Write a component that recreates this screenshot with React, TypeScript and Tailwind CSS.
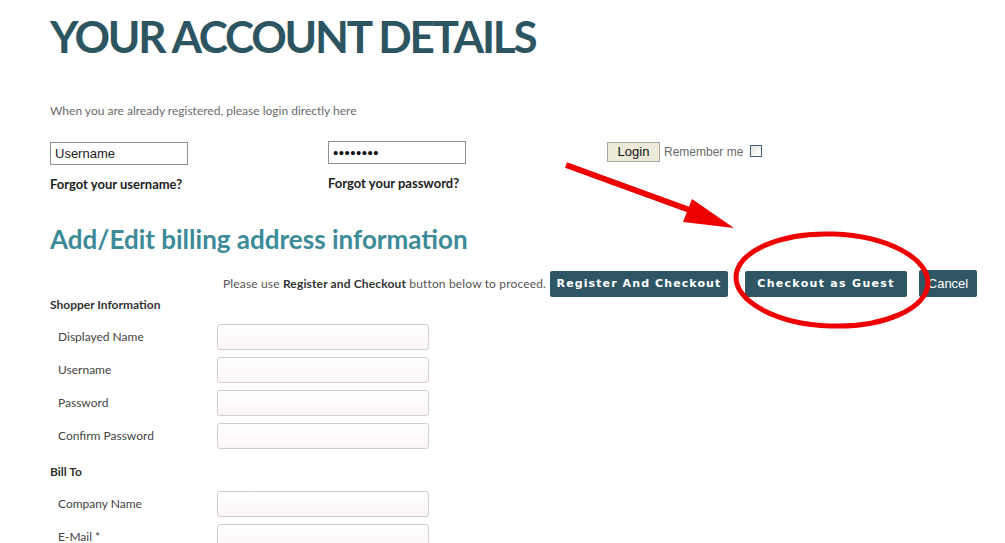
import React from "react";

const labelRows = ["Displayed Name", "Username", "Password", "Confirm Password"];

function FieldRow({ label }: { label: string }) {
  return (
    <div className="flex items-center h-[26px]">
      <label className="w-[167px] pl-[8px] text-[12px] text-[#444]">{label}</label>
      <input
        type="text"
        className="w-[212px] h-[26px] rounded-[3px] border border-[#cfcfcf] bg-gradient-to-b from-white to-[#fdf5f5] outline-none"
      />
    </div>
  );
}

export default function App() {
  return (
    <div className="relative w-[1005px] h-[543px] overflow-hidden bg-white font-['Lato',sans-serif]">
      <div className="pl-[50px] pr-[28px]">
        <h1 className="pt-[13px] text-[44px] leading-[46px] font-bold text-[#2c5561] tracking-[-2.2px]">
          YOUR ACCOUNT DETAILS
        </h1>

        <p className="mt-[45px] text-[12px] leading-[14px] text-[#6b6b6b]">
          When you are already registered, please login directly here
        </p>

        {/* login row */}
        <div className="mt-[22px] flex items-start">
          <div className="w-[278px]">
            <input
              type="text"
              defaultValue="Username"
              className="w-[138px] h-[23px] border border-[#8f8f8f] px-[4px] text-[13px] text-[#222] font-['Liberation_Sans',sans-serif] outline-none"
            />
            <div className="mt-[11px] text-[13px] leading-[16px] font-bold text-[#222]">Forgot your username?</div>
          </div>
          <div className="w-[279px]">
            <input
              type="password"
              defaultValue="password"
              className="w-[138px] h-[23px] border border-[#8f8f8f] px-[4px] text-[15px] text-[#111] outline-none font-['Liberation_Sans',sans-serif] tracking-[0.5px]"
            />
            <div className="mt-[11px] text-[13px] leading-[16px] font-bold text-[#222]">Forgot your password?</div>
          </div>
          <div className="mt-[2px] flex items-center font-['Liberation_Sans',sans-serif]">
            <button className="w-[53px] h-[20px] bg-[#ece9d8] border border-[#a8a8a0] text-[13px] leading-[18px] text-[#111]">
              Login
            </button>
            <span className="ml-[4px] text-[12px] text-[#6b6b6b]">Remember me</span>
            <span className="ml-[7px] mb-[3px] w-[12px] h-[12px] border border-[#3c5f86] bg-gradient-to-br from-[#e4e4dc] to-white" />
          </div>
        </div>

        <h2 className="mt-[32px] text-[26px] leading-[30px] font-bold text-[#3d8b98]">
          Add/Edit billing address information
        </h2>

        {/* action buttons */}
        <div className="mt-[16px] flex items-center justify-end">
          <span className="text-[12px] tracking-[0.15px] text-[#555]">
            Please use <b className="text-[#333]">Register and Checkout</b> button below to proceed.
          </span>
          <button className="ml-[4px] w-[178px] h-[26px] rounded-[2px] bg-[#2e5664] text-white text-[11px] leading-[26px] font-bold tracking-[1.1px] font-['DejaVu_Sans',sans-serif]">
            Register And Checkout
          </button>
          <button className="ml-[17px] w-[162px] h-[26px] rounded-[2px] bg-[#2e5664] text-white text-[11px] leading-[26px] font-bold tracking-[1.3px] font-['DejaVu_Sans',sans-serif]">
            Checkout as Guest
          </button>
          <button className="ml-[12px] w-[58px] h-[27px] rounded-[2px] bg-[#2e5664] text-white text-[13px] font-['Liberation_Sans',sans-serif]">
            Cancel
          </button>
        </div>

        <div className="mt-[1px] text-[12px] font-bold text-[#333] leading-[14px]">Shopper Information</div>
        <div className="mt-[12px] flex flex-col gap-[7px]">
          {labelRows.map((l) => (
            <FieldRow key={l} label={l} />
          ))}
        </div>

        <div className="mt-[16px] text-[12px] font-bold text-[#333] leading-[14px]">Bill To</div>
        <div className="mt-[12px] flex flex-col gap-[7px]">
          <FieldRow label="Company Name" />
          <FieldRow label="E-Mail *" />
        </div>
      </div>

      {/* red annotation */}
      <svg className="absolute left-0 top-0 pointer-events-none" width="1005" height="543" viewBox="0 0 1005 543">
        <line x1="566" y1="165" x2="695" y2="212" stroke="#ee0000" strokeWidth="6" />
        <polygon points="692,199 734,228 683,222" fill="#ee0000" />
        <ellipse cx="832" cy="280" rx="96" ry="46" fill="none" stroke="#ee0000" strokeWidth="5" transform="rotate(2 832 280)" />
      </svg>
    </div>
  );
}
